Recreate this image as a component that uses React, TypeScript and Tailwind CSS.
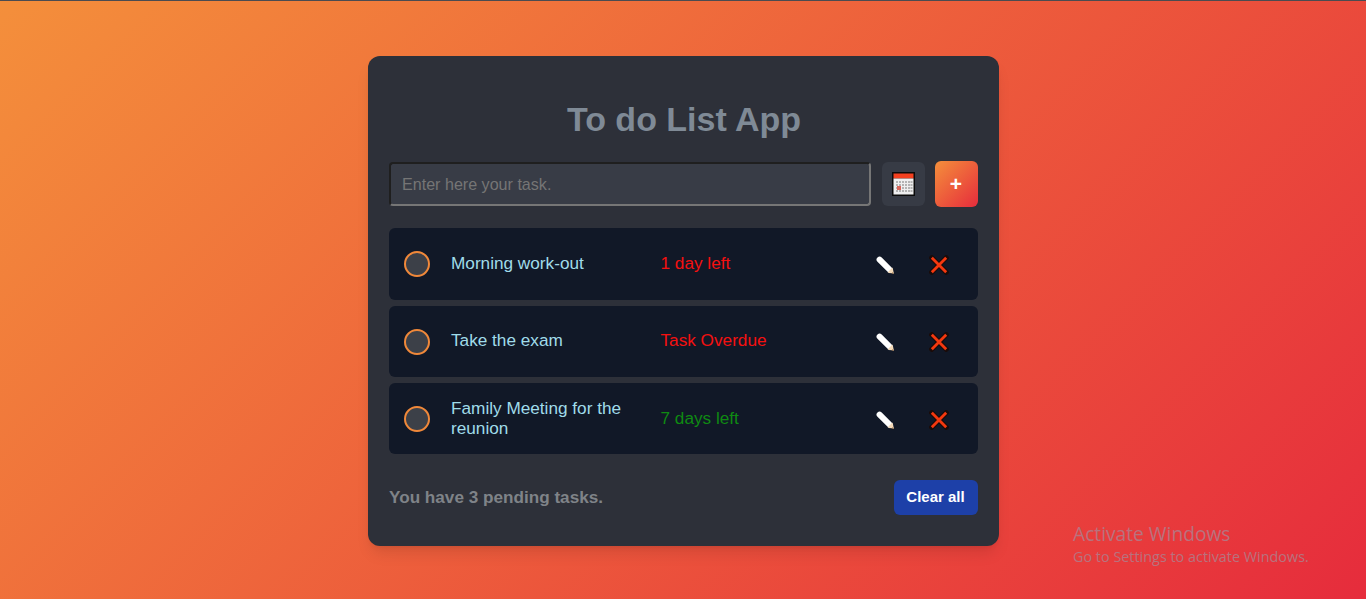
const font = "font-['Liberation_Sans',Arial,sans-serif]";

function Pencil() {
  return (
    <svg width="20" height="20" viewBox="0 0 20 20" className="block">
      <path d="M3.6 5.4 L14.2 16" stroke="#4f86d8" strokeWidth="2" strokeLinecap="round" />
      <path d="M4.6 4.6 L15 15" stroke="#ffffff" strokeWidth="6" strokeLinecap="round" />
      <path d="M12.6 17.4 L17.4 12.6 L19 18.8 Z" fill="#f3d9b8" />
      <path d="M17.4 17.2 L18.9 18.8 L16.9 18.3 Z" fill="#8a5a2a" />
    </svg>
  );
}

function Cross() {
  return (
    <svg width="20" height="20" viewBox="0 0 20 20" className="block">
      <path d="M2.8 2.8 L17.2 17.2 M17.2 2.8 L2.8 17.2" stroke="#190b0a" strokeWidth="5" strokeLinecap="square" />
      <path d="M2.8 2.8 L17.2 17.2 M17.2 2.8 L2.8 17.2" stroke="#f4380f" strokeWidth="2.8" strokeLinecap="butt" />
    </svg>
  );
}

function Calendar() {
  return (
    <svg width="23" height="24" viewBox="0 0 23 24" className="block">
      <rect x="0" y="0" width="23" height="24" fill="#0b0b0b" />
      <rect x="1.5" y="1.5" width="20" height="5" fill="#f4401f" />
      <rect x="1.5" y="6.5" width="20" height="16" fill="#efefef" />
      <g fill="#b4b4b4">
        {[9, 12, 15, 18].map((y) =>
          [4, 7, 10, 13, 16, 18.5].map((x) => <rect key={`${x}-${y}`} x={x} y={y} width="2" height="2" />)
        )}
      </g>
      <rect x="5" y="14" width="4" height="4" fill="#d8665a" />
    </svg>
  );
}

function Row({ title, status, color, h, textShift, iconShift }: { title: string; status: string; color: string; h: string; textShift: string; iconShift: string }) {
  return (
    <div className={`flex items-center rounded-md bg-[#111827] ${h}`}>
      <div className="ml-[15px] box-border h-[26px] w-[26px] shrink-0 rounded-full border-2 border-[#f0883a] bg-[#3c4048]" />
      <div className={`ml-[21.5px] w-[189.5px] shrink-0 text-[17.2px] leading-[20px] text-[#a0dcea] ${textShift}`}>{title}</div>
      <div className={`ml-[20px] w-[200px] shrink-0 text-[17.2px] leading-[20px] ${color} ${textShift}`}>{status}</div>
      <div className={`flex items-center ${iconShift}`}>
        <div className="ml-[14px]"><Pencil /></div>
        <div className="ml-[34px]"><Cross /></div>
      </div>
    </div>
  );
}

export default function App() {
  return (
    <div className={`relative flex h-[599px] w-full flex-col items-center overflow-hidden border-t border-[#4b4b50] bg-[linear-gradient(135deg,#f48f3b,#e62c3c)] ${font}`}>
      <div className="mt-[55px] box-border h-[490px] w-[631px] rounded-xl bg-[#2d3039] px-[21px] pt-[41px] shadow-lg">
        <h1 className="pl-[2px] text-center text-[34px] font-bold leading-[44px] text-[#7f8a96]">To do List App</h1>
        <div className="mt-[20px] flex items-center">
          <input
            placeholder="Enter here your task."
            className="box-border h-[44px] w-[482px] rounded border-2 border-t-[#1f1f1f] border-l-[#1f1f1f] border-r-[#767676] border-b-[#767676] bg-[#383c46] px-[11.5px] text-[16.1px] outline-none placeholder:text-[#757575]"
          />
          <div className="ml-[11px] flex h-[44px] w-[43px] items-center justify-center rounded-md bg-[#373b45]">
            <Calendar />
          </div>
          <button className="ml-[10px] flex h-[46px] w-[43px] items-center justify-center rounded-md bg-[linear-gradient(135deg,#f48f3b,#e62c3c)] pb-[2px] text-[21px] font-bold leading-none text-white">
            +
          </button>
        </div>
        <div className="mt-[21px] flex flex-col gap-[6px]">
          <Row title="Morning work-out" status="1 day left" color="text-[#f51010]" h="h-[72px]" textShift="-translate-y-[1px]" iconShift="translate-y-[1px]" />
          <Row title="Take the exam" status="Task Overdue" color="text-[#f51010]" h="h-[71px]" textShift="-translate-y-[2px]" iconShift="mt-[1px]" />
          <Row title="Family Meeting for the reunion" status="7 days left" color="text-[#0f8a12]" h="h-[71px]" textShift="-translate-y-[1px]" iconShift="mt-[3px]" />
        </div>
        <div className="mt-[26px] flex items-center justify-between">
          <span className="pl-[0.5px] text-[17.15px] font-bold text-[#7f8388]">You have 3 pending tasks.</span>
          <button className="h-[35px] w-[84px] rounded-md bg-[#1d40a8] text-[15px] font-bold text-white">Clear all</button>
        </div>
      </div>
      <div className="absolute left-[1073px] top-[520px] font-['Open_Sans',sans-serif] text-[#b8727e]">
        <div className="text-[19.2px] leading-[26px]">Activate Windows</div>
        <div className="text-[14.4px] leading-[20px]">Go to Settings to activate Windows.</div>
      </div>
    </div>
  );
}
